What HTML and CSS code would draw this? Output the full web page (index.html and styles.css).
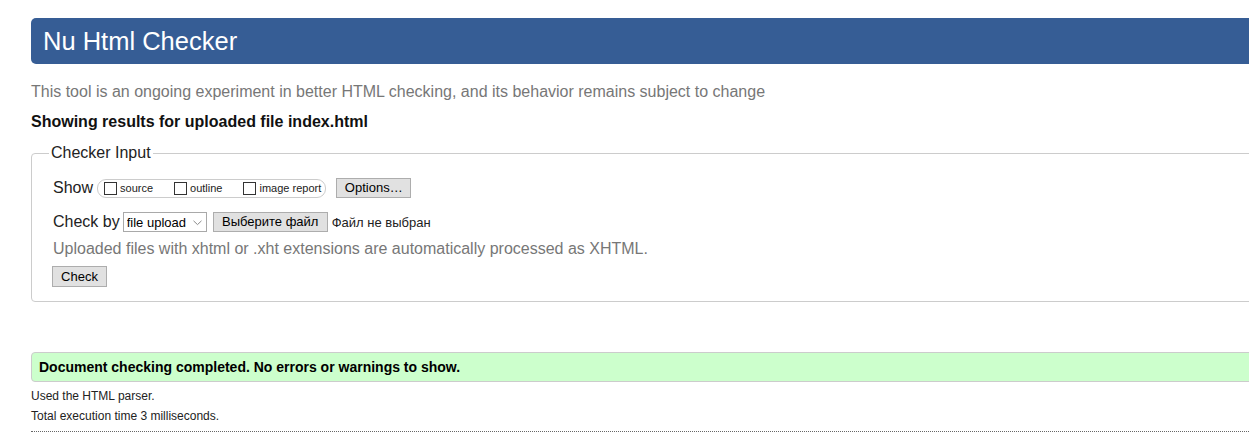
FILE: index.html
```html
<!DOCTYPE html>
<html lang="en">
<head>
<meta charset="utf-8">
<title>Nu Html Checker</title>
<link rel="stylesheet" href="styles.css">
</head>
<body>
<div class="page">
  <h1 class="header">Nu Html Checker</h1>
  <p class="intro">This tool is an ongoing experiment in better HTML checking, and its behavior remains subject to change</p>
  <p class="showing">Showing results for uploaded file index.html</p>
  <fieldset class="input">
    <legend>Checker Input</legend>
    <div class="row row-show">
      <span class="label">Show</span>
      <span class="pill">
        <label class="opt"><input type="checkbox" class="cb">source</label>
        <label class="opt"><input type="checkbox" class="cb">outline</label>
        <label class="opt"><input type="checkbox" class="cb">image report</label>
      </span>
      <button class="btn btn-options">Options…</button>
    </div>
    <div class="row row-by">
      <span class="label">Check by</span>
      <span class="select-wrap">
        <select class="select"><option>file upload</option></select>
        <svg class="chev" width="9" height="6" viewBox="0 0 9 6"><path d="M0.5 0.8 L4.5 4.6 L8.5 0.8" fill="none" stroke="#8a8a8a" stroke-width="1"/></svg>
      </span>
      <button class="btn btn-file">Выберите файл</button>
      <span class="nofile">Файл не выбран</span>
    </div>
    <p class="hint">Uploaded files with xhtml or .xht extensions are automatically processed as XHTML.</p>
    <div class="row row-check">
      <button class="btn btn-check">Check</button>
    </div>
  </fieldset>
  <p class="success">Document checking completed. No errors or warnings to show.</p>
  <p class="details">Used the HTML parser.</p>
  <p class="details">Total execution time 3 milliseconds.</p>
  <hr class="end">
</div>
</body>
</html>
```
FILE: styles.css
```css
html, body {
  margin: 0;
  padding: 0;
  overflow: hidden;
  background: #fff;
}
body {
  font-family: "Liberation Sans", Arial, sans-serif;
  color: #222;
}
.page {
  margin-left: 31px;
  width: 1300px;
  padding-top: 18px;
}
.header {
  margin: 0;
  height: 46px;
  line-height: 46px;
  background: #365d95;
  color: #fff;
  font-size: 25.5px;
  font-weight: normal;
  padding-left: 12px;
  border-radius: 5px;
}
.intro {
  margin: 18px 0 0;
  font-size: 16px;
  line-height: 20px;
  color: #777;
}
.showing {
  margin: 10px 0 0;
  font-size: 16px;
  line-height: 20px;
  font-weight: bold;
  color: #111;
}
.input {
  margin: 11px 0 0;
  padding: 0 0 14px 21px;
  border: 1px solid #ccc;
  border-radius: 4px;
  min-width: 0;
}
.input legend {
  margin-left: -4px;
  padding: 0 2px;
  font-size: 16px;
  line-height: 20px;
  color: #222;
}
.row {
  display: flex;
  align-items: center;
}
.row-show {
  margin-top: 14px;
  height: 22px;
}
.label {
  font-size: 16px;
  line-height: 20px;
}
.pill {
  display: flex;
  align-items: center;
  margin-left: 4px;
  height: 17px;
  border: 1px solid #ccc;
  border-radius: 9px;
  padding: 0 4px 0 6px;
}
.opt {
  display: flex;
  align-items: center;
  font-size: 11px;
  margin-right: 21px;
}
.opt:last-child {
  margin-right: 0;
}
.cb {
  appearance: none;
  -webkit-appearance: none;
  width: 13px;
  height: 13px;
  margin: 0 3px 0 0;
  border: 1px solid #333;
  background: #fff;
  border-radius: 0;
}
.btn {
  font-family: "Liberation Sans", Arial, sans-serif;
  font-size: 13px;
  color: #000;
  background: #e1e1e1;
  border: 1px solid #adadad;
  border-radius: 0;
  padding: 0;
  height: 20px;
  line-height: 18px;
}
.btn-options {
  margin-left: 10px;
  width: 75px;
}
.row-by {
  margin-top: 12px;
  height: 22px;
}
.select-wrap {
  position: relative;
  margin-left: 3px;
  display: inline-block;
  height: 20px;
}
.select {
  appearance: none;
  -webkit-appearance: none;
  width: 84px;
  height: 20px;
  border: 1px solid #a9a9a9;
  border-radius: 0;
  background: #fff;
  font-family: "Liberation Sans", Arial, sans-serif;
  font-size: 13px;
  color: #000;
  padding: 0 0 0 3px;
  margin: 0;
  display: block;
}
.chev {
  position: absolute;
  right: 5px;
  top: 8px;
}
.btn-file {
  margin-left: 6px;
  width: 115px;
}
.nofile {
  margin-left: 4px;
  font-size: 13px;
}
.hint {
  margin: 6px 0 0;
  font-size: 16px;
  line-height: 20px;
  color: #777;
}
.row-check {
  margin-top: 7px;
}
.btn-check {
  margin-left: -1px;
  width: 55px;
  height: 21px;
}
.success {
  margin: 50px 0 0;
  height: 28px;
  line-height: 28px;
  background: #ccffcc;
  border: 1px solid #ccc;
  border-radius: 4px;
  padding-left: 7px;
  font-size: 14px;
  font-weight: bold;
  color: #000;
}
.details {
  margin: 0;
  font-size: 12px;
  line-height: 20px;
  color: #222;
}
.success + .details {
  margin-top: 4px;
}
.end {
  margin: 5px 0 0;
  border: 0;
  border-top: 1px dotted #666;
  height: 0;
}
```
